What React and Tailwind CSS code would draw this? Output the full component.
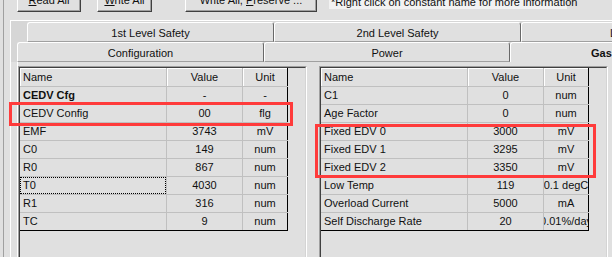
const leftRows = [
  { name: 'CEDV Cfg', value: '-', unit: '-', bold: true },
  { name: 'CEDV Config', value: '00', unit: 'flg' },
  { name: 'EMF', value: '3743', unit: 'mV' },
  { name: 'C0', value: '149', unit: 'num' },
  { name: 'R0', value: '867', unit: 'num' },
  { name: 'T0', value: '4030', unit: 'num', focus: true },
  { name: 'R1', value: '316', unit: 'num' },
  { name: 'TC', value: '9', unit: 'num' },
]

const rightRows = [
  { name: 'C1', value: '0', unit: 'num' },
  { name: 'Age Factor', value: '0', unit: 'num' },
  { name: 'Fixed EDV 0', value: '3000', unit: 'mV' },
  { name: 'Fixed EDV 1', value: '3295', unit: 'mV' },
  { name: 'Fixed EDV 2', value: '3350', unit: 'mV' },
  { name: 'Low Temp', value: '119', unit: '0.1 degC' },
  { name: 'Overload Current', value: '5000', unit: 'mA' },
  { name: 'Self Discharge Rate', value: '20', unit: '0.01%/day' },
]

function Button({ className, children }) {
  return (
    <div className={`h-[23px] shrink-0 flex items-center justify-center bg-[#e0e0e0] border border-white border-r-[#404040] border-b-[#404040] shadow-[inset_-1px_-1px_0_#a0a0a0] leading-[13px] text-[#101010] ${className}`}>
      {children}
    </div>
  )
}

function Grid({ rows }) {
  return (
    <div className="w-[289px] h-[200px] shrink-0 border border-[#a0a0a0] border-r-white border-b-white">
      <div className="h-full border border-[#404040] border-r-[#d4d4d4] border-b-[#d4d4d4] text-[#101010]">
        <div className="w-[268px]">
          {/* header */}
          <div className="flex h-[19px] border-b border-[#c0c0c0]">
            <div className="w-[147px] flex items-center px-[3px] border-r border-[#c0c0c0] shadow-[inset_1px_1px_0_#fff]">Name</div>
            <div className="w-[76px] flex items-center justify-center border-r border-[#c0c0c0] shadow-[inset_1px_1px_0_#fff]">Value</div>
            <div className="w-[45px] flex items-center justify-center border-r border-black shadow-[inset_1px_1px_0_#fff]">Unit</div>
          </div>
          {rows.map((r, i) => (
            <div key={r.name} className={`flex h-[18px] border-b ${i === rows.length - 1 ? 'border-black' : 'border-[#c0c0c0]'}`}>
              <div className={`relative w-[147px] flex items-center px-[3px] border-r border-[#c0c0c0] whitespace-nowrap ${r.bold ? 'font-bold' : ''}`}>
                {r.name}
                {r.focus && <div className="absolute inset-0 border border-dotted border-black" />}
              </div>
              <div className="w-[76px] flex items-center justify-center border-r border-[#c0c0c0]">{r.value}</div>
              <div className="w-[45px] flex items-center justify-center border-r border-black overflow-hidden whitespace-nowrap">{r.unit}</div>
            </div>
          ))}
        </div>
      </div>
    </div>
  )
}

export default function App() {
  return (
    <div className="relative w-[612px] h-[257px] overflow-hidden bg-[#e0e0e0] flex font-['Liberation_Sans',Arial,sans-serif] text-[11px]">
      {/* window edge */}
      <div className="w-[4px] shrink-0 border-r border-[#a0a0a0]" />

      <div className="flex-1 min-w-0 flex flex-col">
        {/* buttons row, cut off at the top */}
        <div className="flex items-end h-[12px] shrink-0">
          <Button className="ml-[13px] w-[64px]"><span><u>R</u>ead All</span></Button>
          <Button className="ml-[16px] w-[55px]"><span><u>W</u>rite All</span></Button>
          <Button className="ml-[33px] w-[132px]"><span>Write All, <u>P</u>reserve ...</span></Button>
          <div className="ml-[12px] mb-[3px] w-[238px] h-[13px] pl-[2px] leading-[13px] bg-[#f2f2f2] text-[#101010] whitespace-nowrap">
            *Right click on constant name for more information
          </div>
        </div>

        {/* tab control */}
        <div className="mt-[8px] ml-[6px] flex-1 flex flex-col border-t border-l border-white">
          <div className="flex pl-[16px] pt-[1px] bg-[#d6d6d6] shrink-0">
            <div className="w-[247px] h-[20px] shrink-0 flex items-center justify-center pt-[2px] bg-[#e0e0e0] rounded-t-[3px] border border-white border-r-[#696969] border-b-[#a0a0a0] text-[#101010]">1st Level Safety</div>
            <div className="w-[247px] h-[20px] shrink-0 flex items-center justify-center pt-[2px] bg-[#e0e0e0] rounded-t-[3px] border border-white border-r-[#696969] border-b-[#a0a0a0] text-[#101010]">2nd Level Safety</div>
            <div className="w-[247px] h-[20px] shrink-0 flex items-center pl-[88px] pt-[2px] bg-[#e0e0e0] rounded-t-[3px] border border-white border-r-[#696969] border-b-[#a0a0a0] text-[#101010] whitespace-nowrap">Lifetime Data</div>
          </div>
          <div className="flex pl-[6px] bg-[#d6d6d6] shrink-0">
            <div className="w-[247px] h-[20px] shrink-0 flex items-center justify-center pt-[2px] bg-[#e0e0e0] rounded-t-[3px] border border-white border-r-[#696969] border-b-[#a0a0a0] text-[#101010]">Configuration</div>
            <div className="w-[246px] h-[20px] shrink-0 flex items-center justify-center pt-[2px] bg-[#e0e0e0] rounded-t-[3px] border border-white border-r-[#696969] border-b-[#a0a0a0] text-[#101010]">Power</div>
            <div className="w-[247px] h-[20px] shrink-0 flex items-center pl-[80px] pt-[2px] bg-[#e0e0e0] rounded-t-[3px] border-t border-l border-white font-bold text-[#101010] whitespace-nowrap">Gas Gauging</div>
          </div>

          {/* tab page */}
          <div className="ml-[6px] flex-1 flex gap-[12px] pt-[4px] border-l border-white">
            <Grid rows={leftRows} />
            <Grid rows={rightRows} />
          </div>
        </div>
      </div>

      {/* red annotation boxes */}
      <div className="absolute left-[9px] top-[102px] w-[284px] h-[24px] border-[3px] border-[#ff3b3b]" />
      <div className="absolute left-[315px] top-[124px] w-[281px] h-[54px] border-[3px] border-[#ff3b3b]" />
    </div>
  )
}
